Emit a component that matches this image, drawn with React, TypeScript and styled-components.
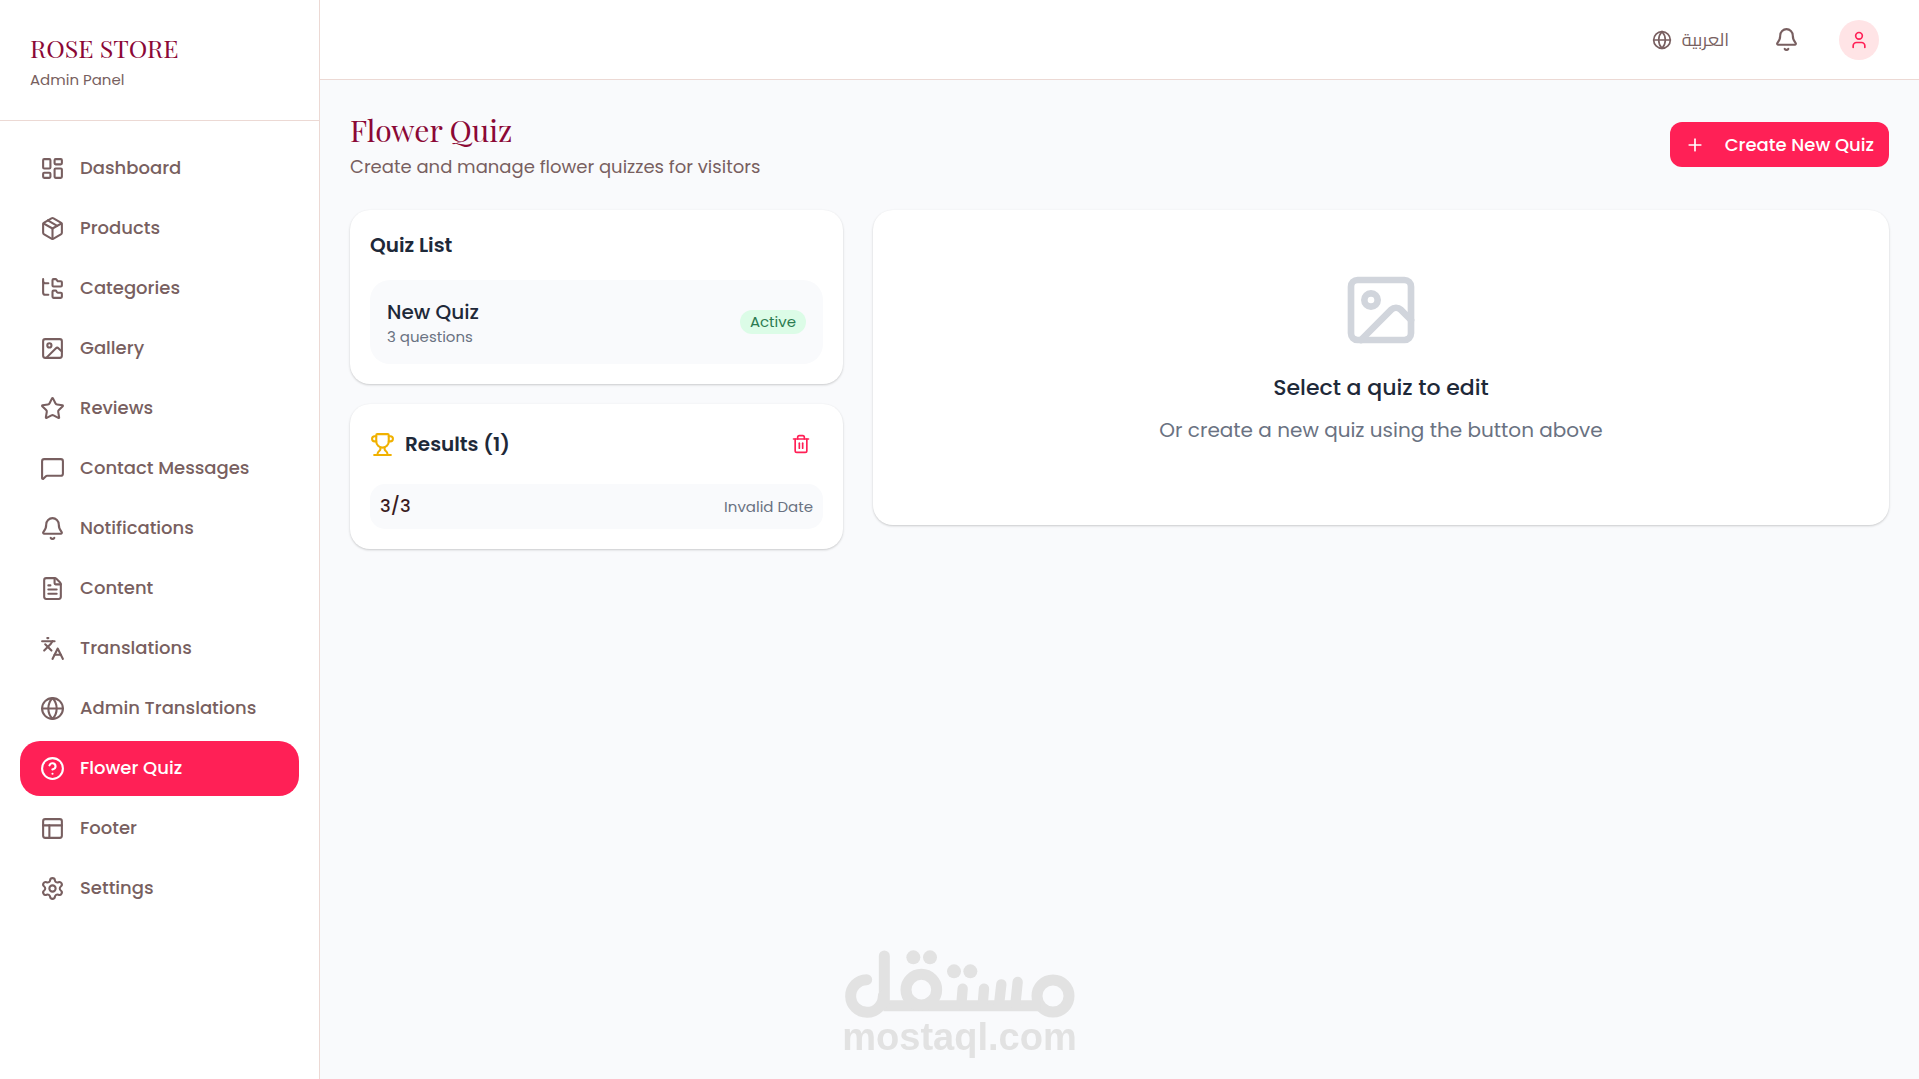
import React from 'react';
import styled, { createGlobalStyle } from 'styled-components';
import {
  Bell, CircleQuestionMark, FileText, FolderTree, Globe, Image, Languages, LayoutDashboard,
  MessageSquare, Package, PanelsTopLeft, Plus, Settings, Star, Trash2, Trophy, User,
} from 'lucide-react';

const GlobalStyle = createGlobalStyle`
  *, *::before, *::after { box-sizing: border-box; }
  body { margin: 0; background: #f9fafc; }
  h1, h2, h3, p, ul { margin: 0; padding: 0; }
  body, button { font-family: Poppins, Inter, "DejaVu Sans", sans-serif; }
  button { border: 0; background: none; cursor: pointer; }
`;

const rose = '#ff2056';
const wine = '#8b0836';
const taupe = '#785f60';
const line = '#ecd9d4';
const ink = '#1e2939';
const grey = '#6a7282';

const Shell = styled.div`
  display: grid;
  grid-template-columns: 320px minmax(0, 1fr);
  min-height: 100vh;
`;

const Sidebar = styled.aside`
  background: #fff;
  border-right: 1px solid ${line};
`;

const Brand = styled.div`
  display: grid;
  gap: 5px;
  padding: 30px;
  border-bottom: 1px solid ${line};
`;

const BrandName = styled.div`
  font: 400 25px/35px "Playfair Display", "Liberation Serif", serif;
  color: ${wine};
`;

const BrandNote = styled.p`
  font-size: 15px;
  line-height: 20px;
  color: ${taupe};
`;

const NavList = styled.ul`
  display: flex;
  flex-direction: column;
  gap: 5px;
  padding: 20px;
  list-style: none;
`;

const NavLink = styled.a<{ $active?: boolean }>`
  display: flex;
  align-items: flex-start;
  gap: 15px;
  padding: 15px 20px;
  border-radius: 20px;
  font-size: 18px;
  font-weight: 500;
  line-height: 24px;
  text-decoration: none;
  color: ${(p) => (p.$active ? '#fff' : taupe)};
  background: ${(p) => (p.$active ? rose : 'transparent')};
`;

const TopBar = styled.header`
  display: flex;
  align-items: center;
  justify-content: flex-end;
  gap: 20px;
  height: 80px;
  padding: 0 30px;
  background: #fff;
  border-bottom: 1px solid ${line};
`;

const BarButton = styled.button`
  display: flex;
  align-items: center;
  gap: 10px;
  padding: 10px;
  font-size: 18px;
  line-height: 24px;
  color: ${taupe};
`;

const LanguageButton = styled(BarButton)`
  padding: 10px 15px;
  font-family: Cairo, Tajawal, "Noto Kufi Arabic", "Noto Sans Arabic", "DejaVu Sans", sans-serif;
`;

const Avatar = styled.span`
  display: grid;
  place-items: center;
  width: 40px;
  height: 40px;
  border-radius: 50%;
  background: #ffe4e6;
  color: ${rose};
`;

const Page = styled.main`
  padding: 30px;
`;

const PageHead = styled.div`
  display: flex;
  align-items: center;
  justify-content: space-between;
  margin-bottom: 31px;
`;

const PageTitle = styled.h1`
  font: 400 30px/40px "Playfair Display", "Liberation Serif", serif;
  color: ${wine};
`;

const PageNote = styled.p`
  margin-top: 5px;
  font-size: 18px;
  line-height: 24px;
  color: ${taupe};
`;

const CreateButton = styled.button`
  display: flex;
  align-items: center;
  gap: 20px;
  height: 45px;
  padding: 0 15px;
  border-radius: 12px;
  background: ${rose};
  color: #fff;
  font-size: 18px;
  font-weight: 500;
  line-height: 24px;
`;

const Columns = styled.div`
  display: grid;
  grid-template-columns: repeat(3, minmax(0, 1fr));
  gap: 30px;
  align-items: start;
`;

const Stack = styled.div`
  display: grid;
  gap: 20px;
`;

const Card = styled.section`
  padding: 20px;
  border-radius: 20px;
  background: #fff;
  box-shadow: 0 1px 3px rgba(0, 0, 0, 0.1), 0 1px 2px rgba(0, 0, 0, 0.1);
`;

const EmptyCard = styled(Card)`
  display: flex;
  flex-direction: column;
  align-items: center;
  grid-column: span 2;
  padding: 60px 30px 80px;
  color: #d1d5dc;
`;

const EmptyTitle = styled.h2`
  margin: 20px 0 10px;
  font-size: 22px;
  font-weight: 500;
  line-height: 35px;
  color: ${ink};
`;

const EmptyNote = styled.p`
  font-size: 20px;
  line-height: 30px;
  color: ${grey};
`;

const CardTitle = styled.h2`
  display: flex;
  align-items: center;
  gap: 10px;
  font-size: 20px;
  font-weight: 600;
  line-height: 30px;
  color: ${ink};
  svg { color: #f0b100; }
`;

const CardHead = styled.div`
  display: flex;
  align-items: center;
  justify-content: space-between;
`;

const DeleteButton = styled.button`
  display: flex;
  padding: 10px 12px;
  color: ${rose};
`;

const QuizItem = styled.button`
  display: flex;
  align-items: center;
  justify-content: space-between;
  width: 100%;
  margin-top: 20px;
  padding: 17px;
  border-radius: 20px;
  background: #f9fafc;
  text-align: left;
`;

const QuizText = styled.span`
  display: grid;
`;

const QuizName = styled.span`
  font-size: 20px;
  font-weight: 500;
  line-height: 30px;
  color: ${ink};
`;

const Small = styled.span`
  font-size: 15px;
  line-height: 20px;
  color: ${grey};
`;

const Badge = styled.span`
  padding: 0 10px;
  border-radius: 12px;
  background: #dcfce7;
  font-size: 15px;
  line-height: 24px;
  color: #2b7a50;
`;

const ResultRow = styled.div`
  display: flex;
  align-items: baseline;
  justify-content: space-between;
  height: 45px;
  margin-top: 20px;
  padding: 10px;
  border-radius: 15px;
  background: #f9fafc;
`;

const Score = styled.span`
  font-size: 18px;
  font-weight: 500;
  line-height: 24px;
  color: #3a1c22;
`;

const Watermark = styled.div`
  position: fixed;
  left: 0;
  right: 0;
  bottom: 23px;
  display: flex;
  flex-direction: column;
  align-items: center;
  pointer-events: none;
  font: 700 38px/38px "Liberation Sans", Arial, sans-serif;
  color: #e2e2e2;
  svg { display: block; }
`;

const navItems = [
  { label: 'Dashboard', Icon: LayoutDashboard },
  { label: 'Products', Icon: Package },
  { label: 'Categories', Icon: FolderTree },
  { label: 'Gallery', Icon: Image },
  { label: 'Reviews', Icon: Star },
  { label: 'Contact Messages', Icon: MessageSquare },
  { label: 'Notifications', Icon: Bell },
  { label: 'Content', Icon: FileText },
  { label: 'Translations', Icon: Languages },
  { label: 'Admin Translations', Icon: Globe },
  { label: 'Flower Quiz', Icon: CircleQuestionMark, active: true },
  { label: 'Footer', Icon: PanelsTopLeft },
  { label: 'Settings', Icon: Settings },
];

const MostaqlLogo = () => (
  <svg width="230" height="68" viewBox="72 62 690 204" fill="none" stroke="currentColor" strokeWidth="33" strokeLinecap="round" aria-hidden="true">
    <circle cx="696" cy="200" r="48" />
    <path d="M187 229H658" strokeLinecap="butt" />
    <circle cx="301" cy="181" r="46" />
    <path d="M190 80V218" />
    <path d="M137 151A49 49 0 1 0 187 200" />
    <path d="M425 178L421 226M489 178L485 226M541 165L534 226M590 158L583 226" strokeWidth="31" />
    <g fill="currentColor" stroke="none">
      <circle cx="277" cy="84" r="21" />
      <circle cx="327" cy="84" r="21" />
      <circle cx="399" cy="126" r="21" />
      <circle cx="448" cy="126" r="21" />
    </g>
  </svg>
);

export default function App() {
  return (
    <>
      <GlobalStyle />
      <Shell>
        <Sidebar>
          <Brand>
            <BrandName>ROSE STORE</BrandName>
            <BrandNote>Admin Panel</BrandNote>
          </Brand>
          <nav aria-label="Admin">
            <NavList>
              {navItems.map(({ label, Icon, active }) => (
                <li key={label}>
                  <NavLink href="#" $active={active} aria-current={active ? 'page' : undefined}>
                    <Icon size={25} />
                    {label}
                  </NavLink>
                </li>
              ))}
            </NavList>
          </nav>
        </Sidebar>
        <div>
          <TopBar>
            <LanguageButton type="button">
              <Globe size={20} />
              <span lang="ar">العربية</span>
            </LanguageButton>
            <BarButton type="button" aria-label="Notifications">
              <Bell size={25} />
            </BarButton>
            <BarButton type="button" aria-label="Account">
              <Avatar><User size={20} /></Avatar>
            </BarButton>
          </TopBar>
          <Page>
            <PageHead>
              <div>
                <PageTitle>Flower Quiz</PageTitle>
                <PageNote>Create and manage flower quizzes for visitors</PageNote>
              </div>
              <CreateButton type="button">
                <Plus size={20} />
                Create New Quiz
              </CreateButton>
            </PageHead>
            <Columns>
              <Stack>
                <Card>
                  <CardTitle>Quiz List</CardTitle>
                  <QuizItem type="button">
                    <QuizText>
                      <QuizName>New Quiz</QuizName>
                      <Small>3 questions</Small>
                    </QuizText>
                    <Badge>Active</Badge>
                  </QuizItem>
                </Card>
                <Card>
                  <CardHead>
                    <CardTitle>
                      <Trophy size={25} />
                      Results (1)
                    </CardTitle>
                    <DeleteButton type="button" aria-label="Delete results">
                      <Trash2 size={20} />
                    </DeleteButton>
                  </CardHead>
                  <ResultRow>
                    <Score>3/3</Score>
                    <Small>Invalid Date</Small>
                  </ResultRow>
                </Card>
              </Stack>
              <EmptyCard>
                <Image size={80} />
                <EmptyTitle>Select a quiz to edit</EmptyTitle>
                <EmptyNote>Or create a new quiz using the button above</EmptyNote>
              </EmptyCard>
            </Columns>
          </Page>
        </div>
      </Shell>
      <Watermark>
        <MostaqlLogo />
        mostaql.com
      </Watermark>
    </>
  );
}
